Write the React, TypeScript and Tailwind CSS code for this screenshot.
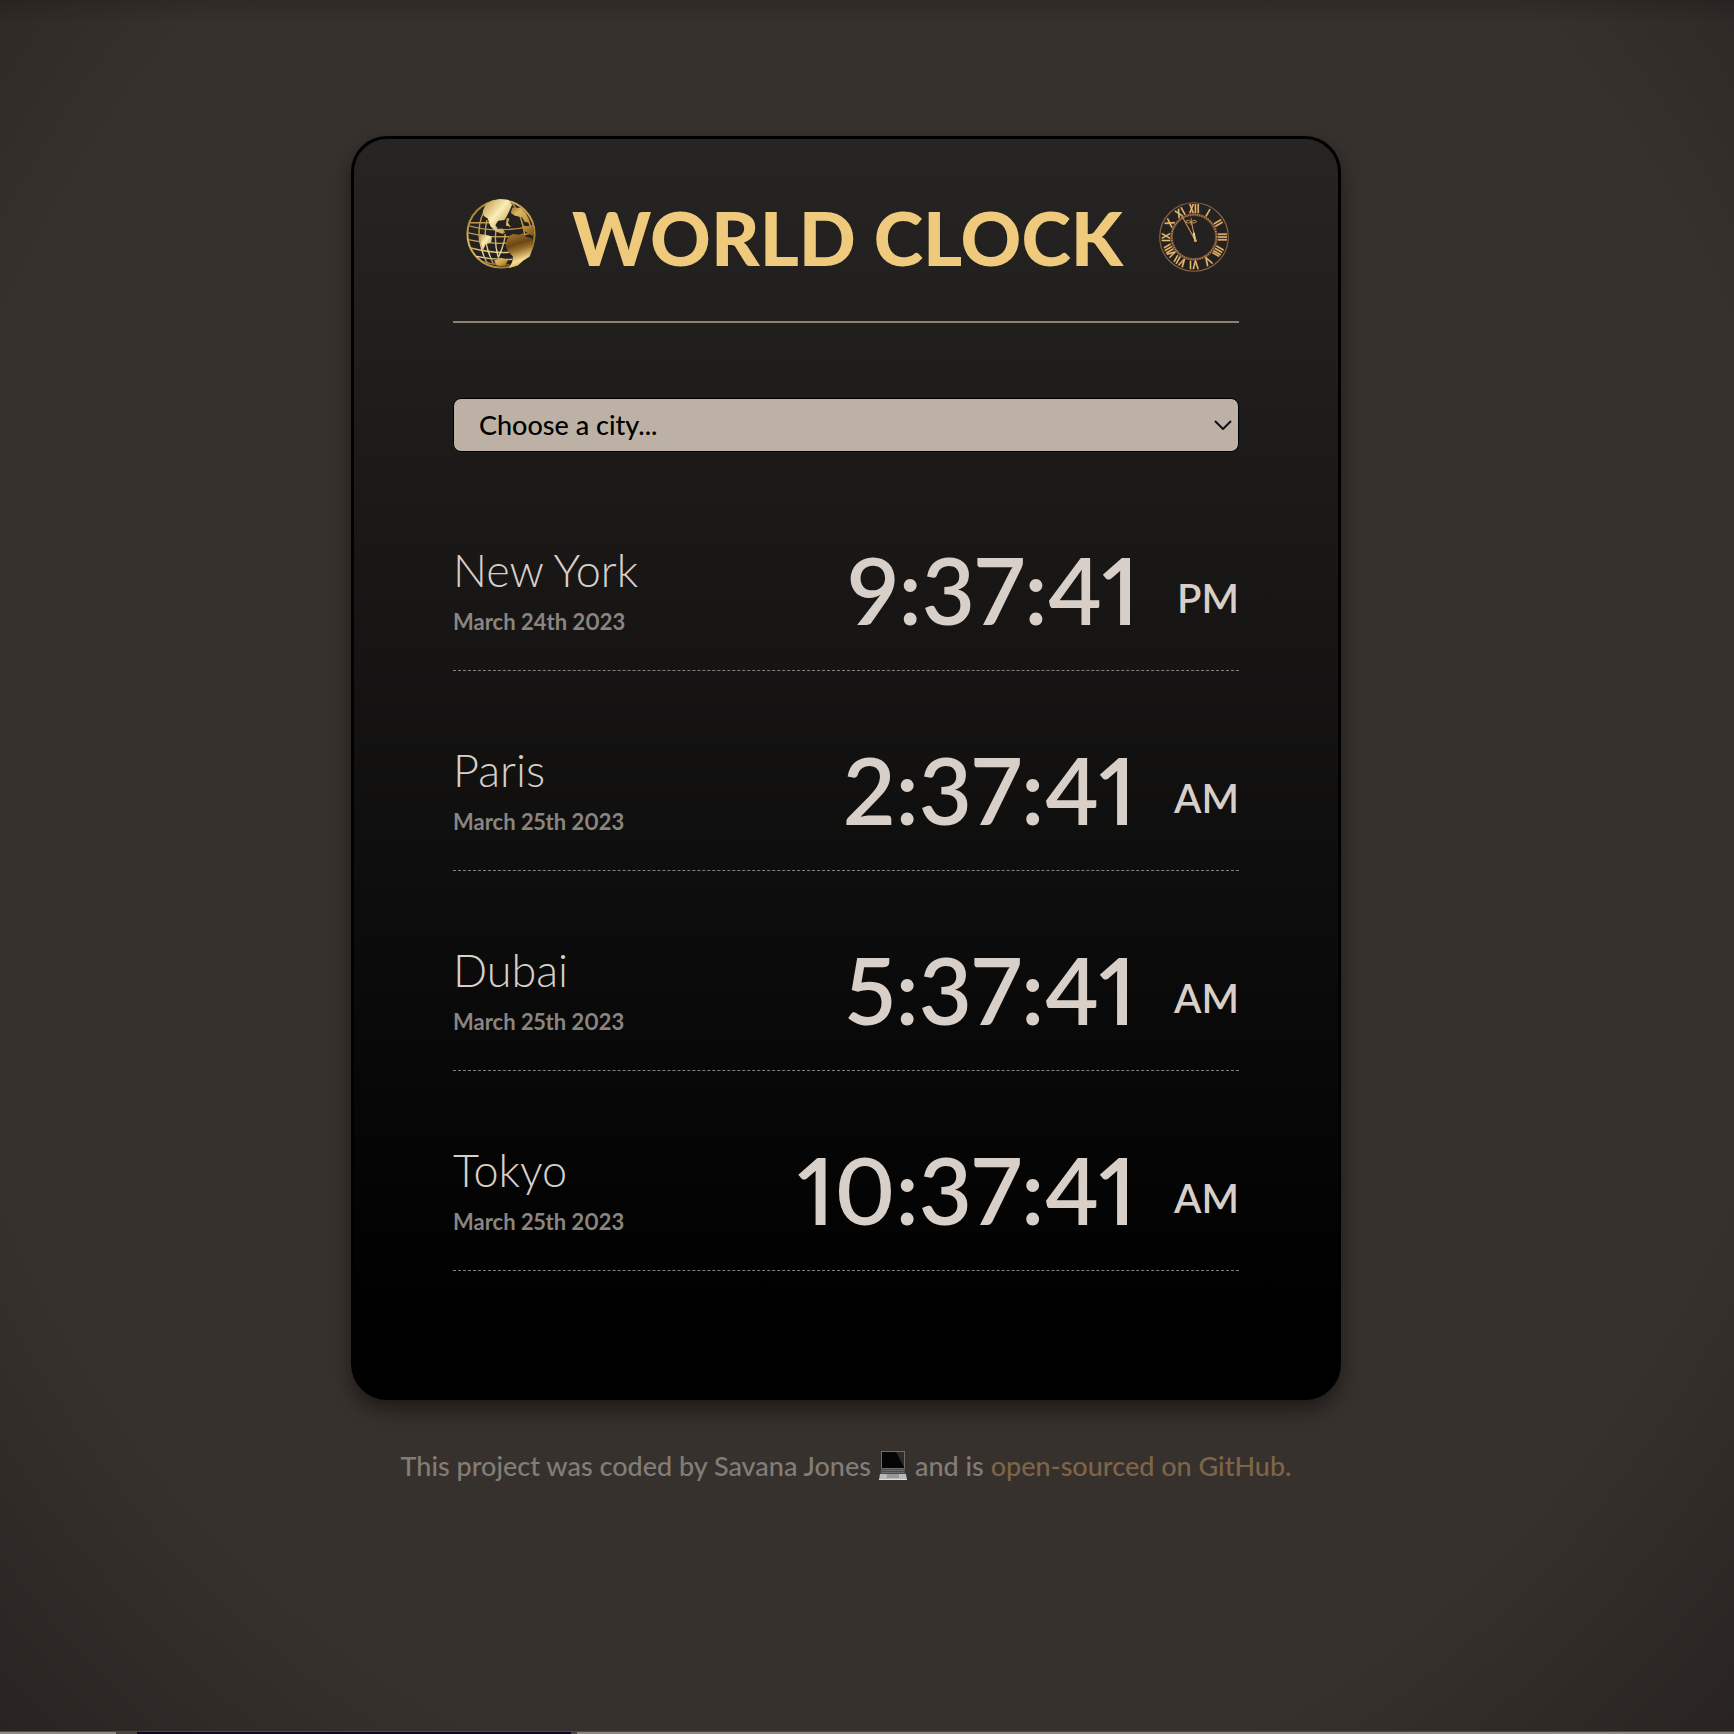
import React from "react";

const cities = [
  { city: "New York", date: "March 24th 2023", time: "9:37:41", period: "PM" },
  { city: "Paris", date: "March 25th 2023", time: "2:37:41", period: "AM" },
  { city: "Dubai", date: "March 25th 2023", time: "5:37:41", period: "AM" },
  { city: "Tokyo", date: "March 25th 2023", time: "10:37:41", period: "AM" },
];

function Globe() {
  return (
    <svg viewBox="0 0 100 100" className="size-[70px] shrink-0 self-start" aria-hidden="true">
      <defs>
        <linearGradient id="gold" x1="0" y1="0" x2="1" y2="1">
          <stop offset="0" stopColor="#7d5718" />
          <stop offset="0.3" stopColor="#d9b764" />
          <stop offset="0.6" stopColor="#c79a3f" />
          <stop offset="1" stopColor="#7a5618" />
        </linearGradient>
        <linearGradient id="wire" x1="0" y1="0" x2="0" y2="1">
          <stop offset="0" stopColor="#b58d40" />
          <stop offset="0.55" stopColor="#c9a65c" />
          <stop offset="0.8" stopColor="#f2e0a8" />
          <stop offset="1" stopColor="#8a5f20" />
        </linearGradient>
        <linearGradient id="north" x1="0" y1="0" x2="1" y2="1">
          <stop offset="0" stopColor="#b98f3c" />
          <stop offset="0.45" stopColor="#fbeeb8" />
          <stop offset="1" stopColor="#a97b2a" />
        </linearGradient>
        <linearGradient id="south" x1="0" y1="0" x2="0.25" y2="1">
          <stop offset="0" stopColor="#a97d30" />
          <stop offset="0.38" stopColor="#6b4614" />
          <stop offset="0.55" stopColor="#9a6f28" />
          <stop offset="0.85" stopColor="#f8e096" />
          <stop offset="1" stopColor="#d9b25a" />
        </linearGradient>
      </defs>
      <g fill="none" stroke="url(#wire)" strokeWidth="2">
        <circle cx="50" cy="50" r="48" stroke="url(#gold)" strokeWidth="2.8" />
        <path d="M3 38Q45 50 97 38M2 48Q48 60 98 48M3 58Q48 66 62 62M7 70Q40 78 62 76M15 82Q42 88 66 86M24 90Q44 95 62 94" />
        <path d="M32 6Q14 34 20 62T34 94M44 40Q38 62 50 96M30 30Q22 60 40 94M56 50Q56 62 46 84M66 6Q80 22 84 52M76 10Q92 26 94 52M6 34Q30 34 34 34" />
      </g>
      <path fill="url(#north)" d="M24 17L28 8 37 2 48 0 60 1 66 8 62 17 58 25 55 30 46 31 42 37 45 43 52 42 56 48 52 50 42 46 35 39 31 28 25 24Z" />
      <path fill="url(#gold)" d="M66 12L78 13 86 22 92 34 84 33 80 26 70 24 64 20ZM58 27L62 28 60 34 64 40 57 38ZM80 38L96 40 97 52 90 50 84 46Z" />
      <path fill="url(#north)" d="M19 50L28 51 37 54 36 62 28 65 24 74 21 62Z" />
      <path fill="url(#gold)" d="M40 88L50 84 60 87 56 96 44 95Z" />
      <path fill="url(#south)" d="M58 59L62 53 67 50 76 51 81 49 86 54 94 56 97 66 91 82 82 88 74 95 61 99 66 90 67 82 60 75 57 67Z" />
    </svg>
  );
}

const numerals = ["XII", "I", "II", "III", "IIII", "V", "VI", "VII", "VIII", "IX", "X", "XI"];

const strokes: Record<string, string> = {
  I: "M50 4V16",
  II: "M48 4V16M52 4V16",
  III: "M46 3V16M50 3V16M54 3V16",
  IIII: "M45 4V16M49 4V16M53 4V16M56 5V16",
  V: "M46 4L50 16L54 4",
  VI: "M44 4L48 16L51 4M55 4V16",
  VII: "M43 4L46 16L49 4M53 4V16M57 5V16",
  VIII: "M42 5L45 16L48 4M50 4V16M54 4V16M58 5V16",
  IX: "M45 4V16M48 4L55 16M55 4L48 16",
  X: "M46 4L54 16M54 4L46 16",
  XI: "M45 4L51 16M51 4L45 16M55 4V16",
  XII: "M44 3L49 16M49 3L44 16M52 3V16M56 3V16",
};

function RomanClock() {
  return (
    <svg viewBox="0 0 100 100" className="size-[70px] shrink-0" aria-hidden="true">
      <g fill="none">
        <circle cx="50" cy="50" r="49" stroke="#8d6142" strokeWidth="1.6" />
        <circle cx="50" cy="50" r="32" stroke="#67452e" strokeWidth="4" />
        <circle cx="50" cy="50" r="32" stroke="#b58a5c" strokeWidth="2" strokeDasharray="1.6 1.75" />
        {numerals.map((n, i) => (
          <g key={n} transform={`rotate(${i * 30} 50 50)`}>
            <path d={strokes[n]} stroke="#a87842" strokeWidth="2.8" />
            <path d={strokes[n]} stroke="#efcd85" strokeWidth="1.2" />
          </g>
        ))}
        <path d="M52 55L46 27M52 55L32 19" stroke="#c69254" strokeWidth="1.6" />
        <path d="M49.500 44L51.500 54" stroke="#f0cf8b" strokeWidth="2.8" />
        <path d="M38 28Q42 24 46 29Q50 24 54 28Q50 32 46 29Q42 32 38 28ZM46 23V33" stroke="#c69254" strokeWidth="1.4" />
        <circle cx="52" cy="55" r="2.200" fill="#dba968" />
      </g>
    </svg>
  );
}

function Laptop() {
  return (
    <svg viewBox="0 0 28 29" className="mx-2 inline-block h-[29px] w-7 align-[-4px]" role="img" aria-label="laptop">
      <path fill="#6d6d6d" d="M2 0H26V18H2Z" />
      <path fill="#050505" d="M3 1H25V17H3Z" />
      <path fill="#2c2c2c" d="M17 1H25V16Z" />
      <path fill="#4c4c4c" d="M2 18H26L27 23H1Z" />
      <path stroke="#8a8a8a" strokeWidth="0.7" strokeDasharray="1.500 0.600" d="M3 19.500H25M3 21.500H25" />
      <path fill="#b9b9b9" d="M1 23H27L28 29H0Z" />
      <path fill="#979797" d="M8 23H20V27H8Z" />
      <path fill="#dedede" d="M0 28H28V29H0Z" />
    </svg>
  );
}

export default function App() {
  return (
    <div className="flex min-h-screen flex-col bg-[#37312d] font-['Lato','Gill_Sans',sans-serif]">
      <div className="flex flex-1 flex-col items-center bg-[linear-gradient(rgba(0,0,0,0.14),transparent_24px),radial-gradient(ellipse_farthest-side_at_50%_44%,transparent_108%,rgba(0,0,0,0.28)_142%)] px-4 pt-[136px] pb-16 lg:pr-[42px] lg:pl-0">
        <main className="w-full max-w-[990px] rounded-[36px] border-3 border-black bg-[linear-gradient(#262523,#191716_34%,#0a0a0a_68%,#000_94%)] px-[99px] pt-[60px] pb-[126px] shadow-[0_10px_20px_rgba(0,0,0,0.45)]">
          <header className="flex items-center justify-between border-b-2 border-[#8f8070] pr-[10px] pb-[46px] pl-[13px]">
            <Globe />
            <h1 className="text-[75px] leading-[76px] font-black whitespace-nowrap text-[#efc97c]">WORLD CLOCK</h1>
            <RomanClock />
          </header>
          <div className="relative mt-[75px]">
            <select
              aria-label="Choose a city"
              defaultValue=""
              className="h-[54px] w-full appearance-none rounded-lg border border-black bg-[#bdb1a5] pr-10 pl-[25px] text-[27px] leading-9 font-medium text-black"
            >
              <option value="">Choose a city...</option>
              {cities.map((c) => (
                <option key={c.city}>{c.city}</option>
              ))}
            </select>
            <svg viewBox="0 0 18 10" className="pointer-events-none absolute top-[22px] right-[7px] h-[10px] w-[18px]" aria-hidden="true">
              <path d="M1 1L9 9L17 1" fill="none" stroke="#111" strokeWidth="2" />
            </svg>
          </div>
          <div className="mt-[19px]">
            {cities.map((c) => (
              <section
                key={c.city}
                className="flex h-[200px] items-end justify-between border-b border-dashed border-[#85807a] pb-[32px] text-[#d8cfc8] proportional-nums"
              >
                <div>
                  <h2 className="text-[45px] leading-[72px] font-light">{c.city}</h2>
                  <p className="text-[22px] leading-8 font-bold text-[#8a8581]">{c.date}</p>
                </div>
                <p className="flex items-end gap-[38px] leading-[80px]">
                  <span className="pb-2 text-[92px] font-semibold">{c.time}</span>
                  <small className="text-[40px] font-semibold">{c.period}</small>
                </p>
              </section>
            ))}
          </div>
        </main>
        <footer className="mt-[46px] text-center text-[27px] leading-10 font-medium text-[#837d77]">
          This project was coded by Savana Jones
          <Laptop />
          and is{" "}
          <a href="#" className="text-[#7d6549]">
            open-sourced on GitHub.
          </a>
        </footer>
      </div>
      <div className="flex h-[3px] border-t border-[#4c4845] bg-[#8e8884]">
        <div className="w-[116px]" />
        <div className="w-[21px] bg-[#4a4542]" />
        <div className="w-[434px] bg-[#0f0624]" />
        <div className="w-[6px] bg-[#4a4542]" />
      </div>
    </div>
  );
}
